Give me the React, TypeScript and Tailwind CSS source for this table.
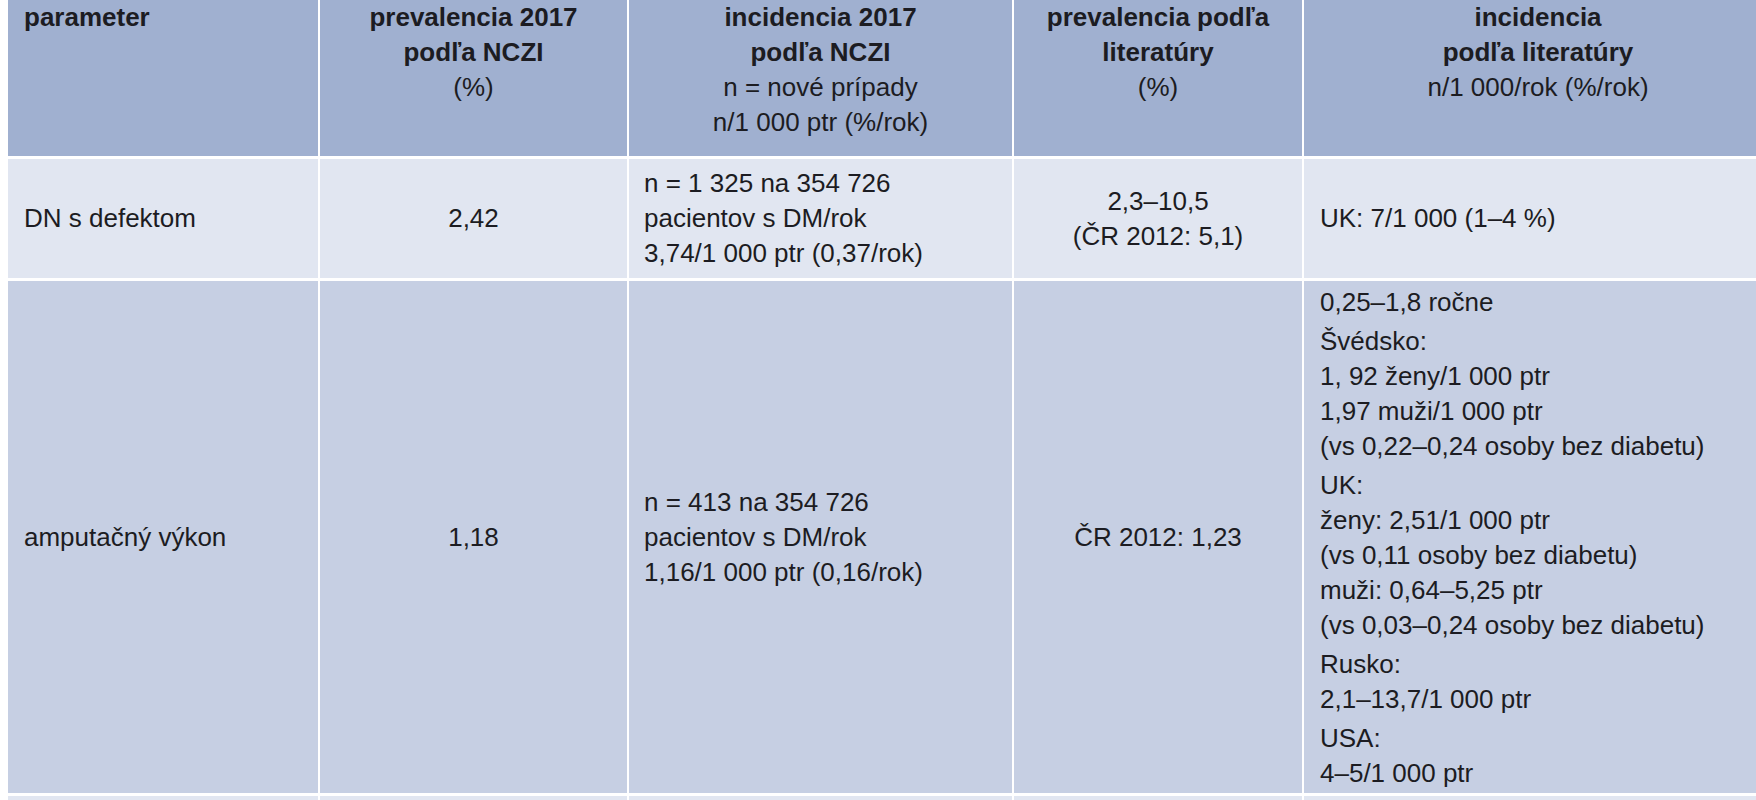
const headBg = "bg-[#a0b0d0]";
const lightBg = "bg-[#e1e6f1]";
const darkBg = "bg-[#c6cfe3]";

const Lines = ({ lines }: { lines: string[] }) => (
  <>
    {lines.map((l, i) => (
      <div key={i} className="whitespace-nowrap">
        {l}
      </div>
    ))}
  </>
);

const App = () => {
  const amputationGroups = [
    ["0,25–1,8 ročne"],
    ["Švédsko:", "1, 92 ženy/1 000 ptr", "1,97 muži/1 000 ptr", "(vs 0,22–0,24 osoby bez diabetu)"],
    ["UK:", "ženy: 2,51/1 000 ptr", "(vs 0,11 osoby bez diabetu)", "muži: 0,64–5,25 ptr", "(vs 0,03–0,24 osoby bez diabetu)"],
    ["Rusko:", "2,1–13,7/1 000 ptr"],
    ["USA:", "4–5/1 000 ptr"],
  ];

  return (
    <div
      className="h-[800px] w-full overflow-hidden bg-white pl-[8px] text-[26px] leading-[35px] text-[#1c1c22]"
      style={{ fontFamily: '"Liberation Sans", Arial, sans-serif' }}
    >
      <div className="grid w-[1762px] grid-cols-[310px_307px_383px_288px_468px] grid-rows-[156px_119px_512px_40px] gap-x-[2px] gap-y-[3px]">
        {/* header */}
        <div className={`${headBg} pl-[16px] font-bold`}>parameter</div>
        <div className={`${headBg} text-center`}>
          <div className="font-bold">prevalencia 2017</div>
          <div className="font-bold">podľa NCZI</div>
          <div>(%)</div>
        </div>
        <div className={`${headBg} text-center`}>
          <div className="font-bold">incidencia 2017</div>
          <div className="font-bold">podľa NCZI</div>
          <div>n = nové prípady</div>
          <div>n/1 000 ptr (%/rok)</div>
        </div>
        <div className={`${headBg} text-center`}>
          <div className="font-bold whitespace-nowrap">prevalencia podľa</div>
          <div className="font-bold">literatúry</div>
          <div>(%)</div>
        </div>
        <div className={`${headBg} text-center`}>
          <div className="font-bold">incidencia</div>
          <div className="font-bold">podľa literatúry</div>
          <div>n/1 000/rok (%/rok)</div>
        </div>

        {/* DN s defektom */}
        <div className={`${lightBg} flex items-center pl-[16px]`}>DN s defektom</div>
        <div className={`${lightBg} flex items-center justify-center`}>2,42</div>
        <div className={`${lightBg} flex flex-col justify-center pl-[15px]`}>
          <Lines lines={["n = 1 325 na 354 726", "pacientov s DM/rok", "3,74/1 000 ptr (0,37/rok)"]} />
        </div>
        <div className={`${lightBg} flex flex-col items-center justify-center`}>
          <Lines lines={["2,3–10,5", "(ČR 2012: 5,1)"]} />
        </div>
        <div className={`${lightBg} flex items-center pl-[16px]`}>UK: 7/1 000 (1–4 %)</div>

        {/* amputačný výkon */}
        <div className={`${darkBg} flex items-center pl-[16px]`}>amputačný výkon</div>
        <div className={`${darkBg} flex items-center justify-center`}>1,18</div>
        <div className={`${darkBg} flex flex-col justify-center pl-[15px]`}>
          <Lines lines={["n = 413 na 354 726", "pacientov s DM/rok", "1,16/1 000 ptr (0,16/rok)"]} />
        </div>
        <div className={`${darkBg} flex items-center justify-center`}>ČR 2012: 1,23</div>
        <div className={`${darkBg} flex flex-col gap-[4px] pl-[16px] pt-[4px]`}>
          {amputationGroups.map((g, i) => (
            <div key={i}>
              <Lines lines={g} />
            </div>
          ))}
        </div>

        {/* next row, cut off */}
        <div className={lightBg}></div>
        <div className={lightBg}></div>
        <div className={lightBg}></div>
        <div className={lightBg}></div>
        <div className={lightBg}></div>
      </div>
    </div>
  );
};

export default App;
